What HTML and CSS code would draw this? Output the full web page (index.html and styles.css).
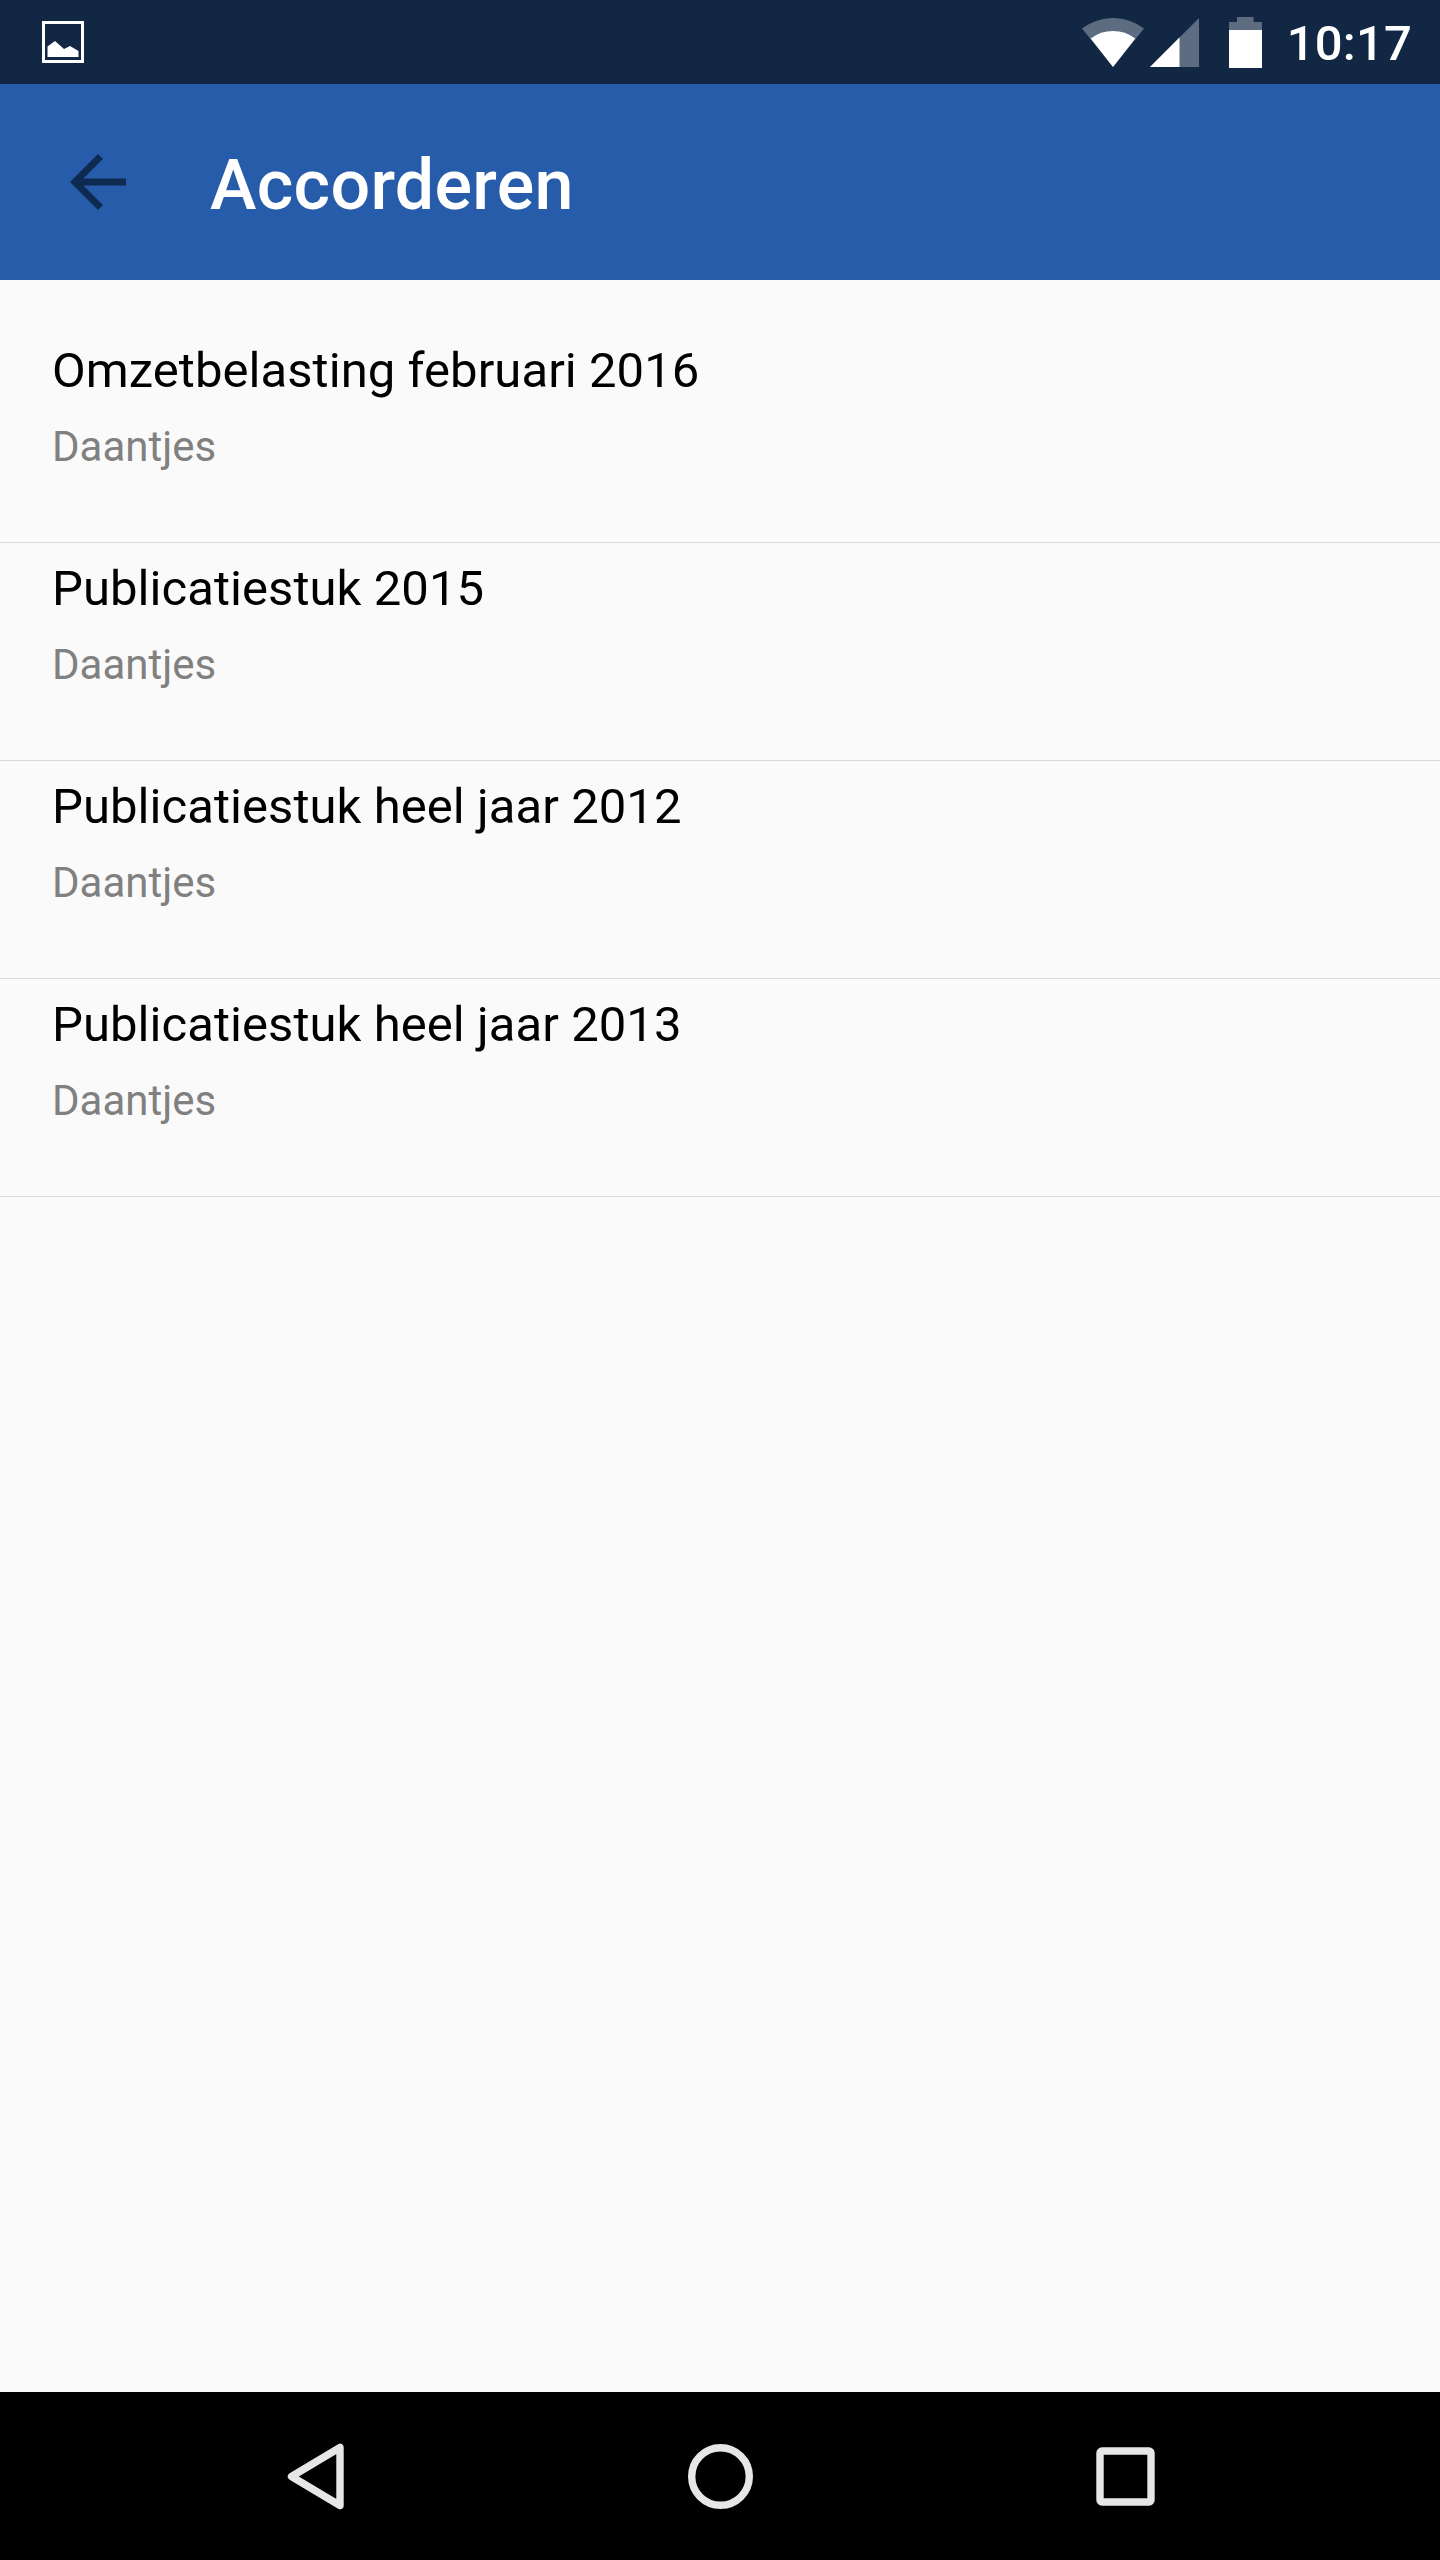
FILE: index.html
```html
<!DOCTYPE html>
<html lang="nl">
<head>
    <title>Accorderen</title>
    <meta charset="utf-8">
    <meta name="viewport" content="width=device-width, initial-scale=1"/>
    <link rel="stylesheet" href="styles.css">
</head>
<body>
    <div class="statusbar">
        <svg class="picture" width="42" height="42" viewBox="0 0 42 42">
            <rect x="1.5" y="1.5" width="39" height="39" fill="none" stroke="#fff" stroke-width="3"/>
            <path d="M5.5 36V25.5L13 20l9 8 6-3 8.500 5V36z" fill="#fff"/>
        </svg>
        <div class="status-right">
            <svg class="wifi" width="62" height="49" viewBox="0 0 62 49">
                <path d="M31 49L0 10.500A51 51 0 0 1 62 10.500z" fill="#fff" fill-opacity=".32"/>
                <path d="M31 49L8.700 20.500A37 37 0 0 1 53.300 20.500z" fill="#fff"/>
            </svg>
            <svg class="signal" width="49" height="49" viewBox="0 0 49 49">
                <path d="M0 49L49 0V49z" fill="#fff" fill-opacity=".32"/>
                <path d="M0 49L29.500 19.500V49z" fill="#fff"/>
            </svg>
            <svg class="battery" width="33" height="51" viewBox="0 0 33 51">
                <path d="M8 0H24.500V5H33V13H0V5H8z" fill="#fff" fill-opacity=".32"/>
                <path d="M0 13H33V51H0z" fill="#fff"/>
            </svg>
            <span class="time">10:17</span>
        </div>
    </div>

    <div class="header">
        <svg class="back" width="84" height="84" viewBox="0 0 24 24">
            <path d="M20 11H7.830l5.590-5.590L12 4l-8 8 8 8 1.410-1.410L7.830 13H20v-2z" fill="#0f2a50"/>
        </svg>
        <h1>Accorderen</h1>
    </div>

    <div class="list">
        <div class="item">
            <div class="name">Omzetbelasting februari 2016</div>
            <div class="client">Daantjes</div>
        </div>
        <div class="item">
            <div class="name">Publicatiestuk 2015</div>
            <div class="client">Daantjes</div>
        </div>
        <div class="item">
            <div class="name">Publicatiestuk heel jaar 2012</div>
            <div class="client">Daantjes</div>
        </div>
        <div class="item">
            <div class="name">Publicatiestuk heel jaar 2013</div>
            <div class="client">Daantjes</div>
        </div>
    </div>

    <div class="navbar">
        <svg width="84" height="84" viewBox="0 0 84 84">
            <path d="M67 13.500V71.500L18.500 42.500z"/>
        </svg>
        <svg width="84" height="84" viewBox="0 0 84 84">
            <circle cx="42.500" cy="42.500" r="28.800"/>
        </svg>
        <svg width="84" height="84" viewBox="0 0 84 84">
            <rect x="17" y="17" width="51" height="51" rx="2"/>
        </svg>
    </div>
</body>
</html>
```
FILE: styles.css
```css
body{
    margin:0;
    height:2560px;
    display:flex;
    flex-direction:column;
    background:#fafafa;
    font-family:Roboto, sans-serif;
}
svg{
    display:block;
    flex:none;
}
.statusbar{
    height:84px;
    display:flex;
    align-items:center;
    justify-content:space-between;
    padding:0 28px 0 42px;
    background:#112744;
}
.status-right{
    display:flex;
    align-items:center;
}
.signal{
    margin-left:6px;
}
.battery{
    margin-left:30px;
}
.time{
    margin-left:25px;
    padding-top:3px;
    color:#fff;
    font-size:49px;
    font-weight:500;
    line-height:58px;
    letter-spacing:.2px;
}
/* top bar */
.header{
    height:196px;
    display:flex;
    align-items:center;
    padding-left:56px;
    background:#265ca9;
}
h1{
    margin:6px 0 0 70px;
    color:#fff;
    font-size:70px;
    font-weight:500;
    line-height:82px;
    letter-spacing:.3px;
}
.list{
    flex:1;
    padding-top:45px;
}
.item{
    box-sizing:border-box;
    height:218px;
    padding:17px 52px 0;
    border-bottom:1px solid #d9d9d9;
}
.name{
    color:#000;
    font-size:49px;
    line-height:58px;
    letter-spacing:.06px;
}
.client{
    margin-top:22px;
    color:#808080;
    font-size:42px;
    line-height:50px;
}
/* android buttons */
.navbar{
    height:168px;
    display:flex;
    align-items:center;
    justify-content:center;
    gap:321px;
    background:#000;
}
.navbar svg{
    fill:none;
    stroke:#e6e6e6;
    stroke-width:7.4px;
    stroke-linejoin:round;
}
```
